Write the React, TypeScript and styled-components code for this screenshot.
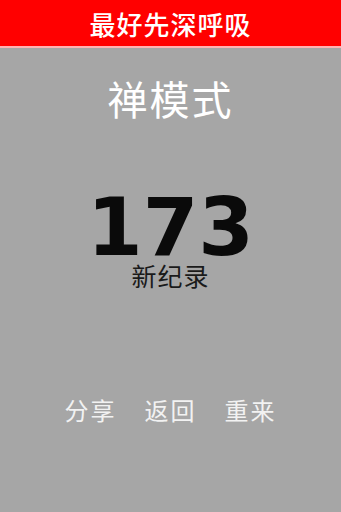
import React from 'react';
import styled, { createGlobalStyle } from 'styled-components';

const GlobalStyle = createGlobalStyle`
  html, body {
    margin: 0;
    padding: 0;
    background: #a6a6a6;
  }
  body {
    font-family: "Noto Sans CJK SC", "DejaVu Sans", sans-serif;
  }
`;

const Screen = styled.div`
  width: 341px;
  height: 512px;
  background: #a6a6a6;
  display: flex;
  flex-direction: column;
  overflow: hidden;
`;

const Header = styled.header`
  height: 46px;
  background: #ff0000;
  border-bottom: 2px solid #ffb3b3;
  display: flex;
  align-items: center;
  justify-content: center;
  color: #ffffff;
  font-size: 26px;
  font-weight: 500;
  letter-spacing: 1px;
`;

const Body = styled.main`
  flex: 1;
  display: flex;
  flex-direction: column;
  align-items: center;
`;

const ModeTitle = styled.h1`
  margin: 28px 0 0;
  font-size: 40px;
  font-weight: 400;
  line-height: 44px;
  color: #ffffff;
  letter-spacing: 2px;
`;

const Score = styled.div`
  margin-top: 74px;
  font-family: "DejaVu Sans", sans-serif;
  font-size: 80px;
  font-weight: 700;
  line-height: 68px;
  color: #0a0a0a;
`;

const Record = styled.div`
  font-size: 25px;
  line-height: 26px;
  color: #1a1a1a;
  letter-spacing: 1px;
`;

const Actions = styled.nav`
  margin-top: 107px;
  display: flex;
  gap: 28px;
`;

const ActionButton = styled.button`
  border: none;
  background: none;
  padding: 0;
  font-family: inherit;
  font-size: 24px;
  line-height: 30px;
  color: #f2f2f2;
  letter-spacing: 2px;
  cursor: pointer;
`;

const actions = ['分享', '返回', '重来'];

const App = () => {
  return (
    <>
      <GlobalStyle />
      <Screen>
        <Header>最好先深呼吸</Header>
        <Body>
          <ModeTitle>禅模式</ModeTitle>
          <Score>173</Score>
          <Record>新纪录</Record>
          <Actions>
            {actions.map((label) => (
              <ActionButton key={label}>{label}</ActionButton>
            ))}
          </Actions>
        </Body>
      </Screen>
    </>
  );
};

export default App;
